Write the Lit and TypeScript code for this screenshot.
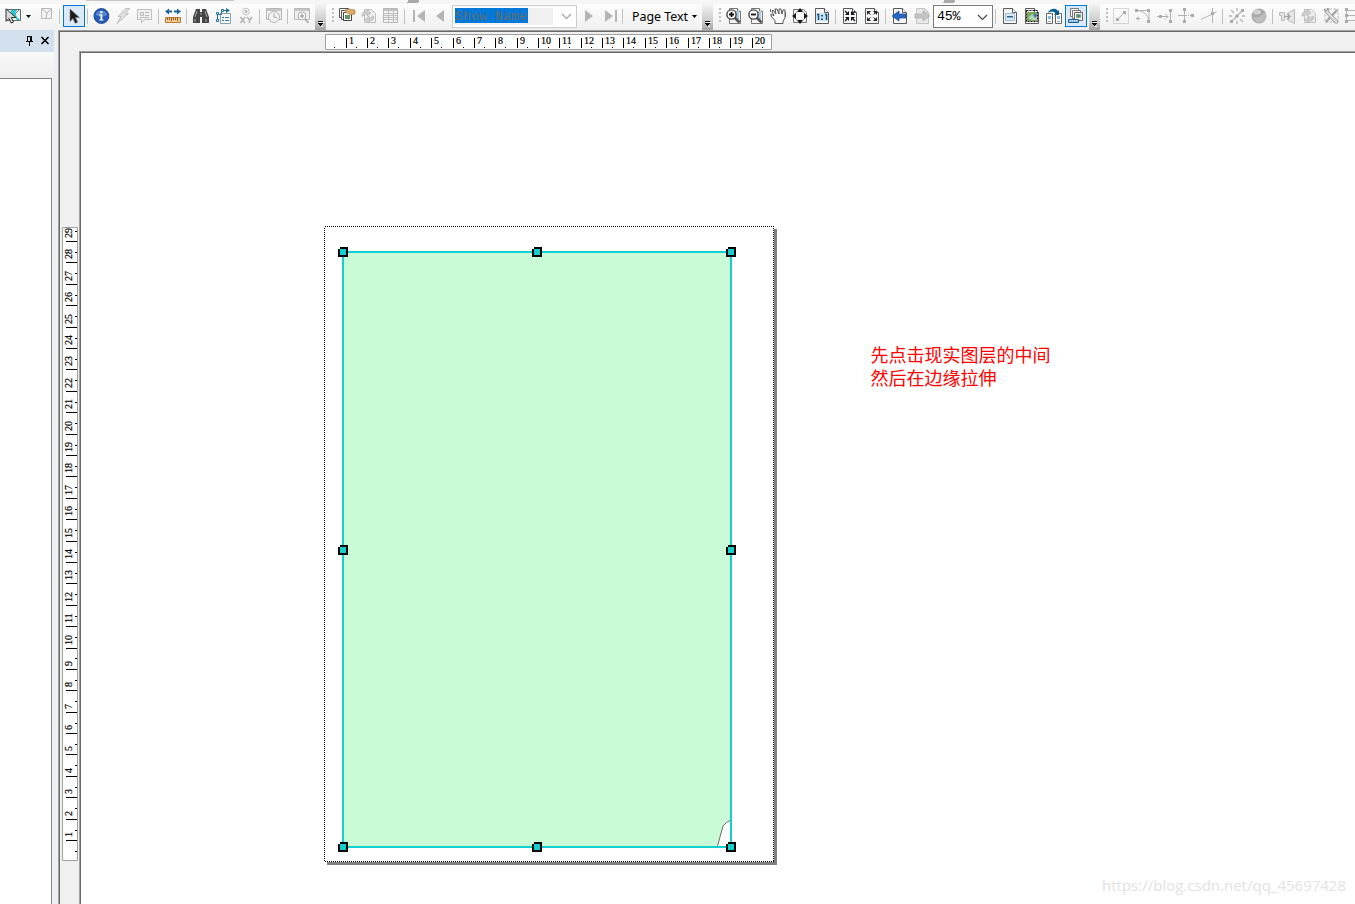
import { LitElement, html, svg, css } from "lit";
import { customElement, property } from "lit/decorators.js";

/* Shared outlines on a 16px grid. */
const sheet = svg`<path d="M1.5 .5h9l4 4v11h-13z" fill="#f5f5f5" stroke="#5a5a5a"/><path d="M10.5 .5v4h4" fill="#fff" stroke="#5a5a5a"/>`;
const graySheet = svg`<path d="M2.5 .5h8l4 4v11h-12z" fill="#e8e8e8" stroke="#c4c4c4"/><path d="M10.5 .5v4h4" fill="none" stroke="#c4c4c4"/>`;
const lens = (plus: boolean) => svg`<path d="M3.5 .5h8l3 3v12h-11z" fill="#f5f5f5" stroke="#777"/><path d="M11.5 .5v3h3" fill="#fff" stroke="#777"/><path d="M9 3h4v10h-3z" fill="#a9cde6"/><path d="M8.5 9.5l5 5" stroke="#555" stroke-width="2.6"/><circle cx="5.5" cy="6.5" r="4.6" fill="#fff" stroke="#444" stroke-width="1.4"/><path d="M3 6.5h5${plus ? "M5.5 4v5" : ""}" stroke="#111" stroke-width="1.8"/>`;
const dot = (x: number, y: number) => svg`<path d="M${x} ${y}h3v3h-3z" fill="#ababab"/>`;

const icons: Record<string, unknown> = {
  selectFeatures: svg`<path d="M1.5 1.5h14v11h-14z" fill="#f5f5f5" stroke="#666"/><path d="M6 2h6l-2 3 2 4 3 3h-3l-6-7z" fill="#20c9d7"/><path d="M10 6l4-4" stroke="#666"/><path d="M1 .8v12.6l3-3 2.1 4.7 2.3-1-2-4.6h4.5z" fill="#d8d8d8" stroke="#333"/>`,
  clear: svg`<path d="M.5 .5h10v10h-10z" fill="#f2f2f2" stroke="#bbb"/><path d="M1 1l5 4 4-4M6 5l-1 5" fill="none" stroke="#b5b5b5"/>`,
  arrow: svg`<path d="M4 1v12.5l3-3 2.2 4.8 2.5-1.1-2.3-4.7h4z" fill="#1c1c1c" stroke="#777" stroke-width=".6"/>`,
  info: svg`<circle cx="8.4" cy="8" r="7.4" fill="#245bb8" stroke="#1a438c"/><path d="M2.5 7a6 5.3 0 0 1 11.8 0q-6 3-11.8 0" fill="#5586d2"/><path d="M6.3 6.2h3v5.2h1.2v1.2H6.3v-1.2h1.2V7.4H6.3zM7.3 3h2.1v2H7.3z" fill="#fff"/>`,
  flash: svg`<path d="M10.5 .5h4l-4 5h3L2 15.5l4-7H3z" fill="#dedede" stroke="#c0c0c0"/>`,
  note: svg`<path d="M.5 1.5h14v10h-7l-3 3.5v-3.5h-4z" fill="#f0f0f0" stroke="#c0c0c0"/><path d="M3.5 4.5h3v3h-3zM8 4.5h4M8 7.5h4M3 9.5h9" fill="none" stroke="#b8b8b8"/>`,
  measure: svg`<path d="M.5 9.5h15v5h-15z" fill="#edcd91" stroke="#bd7832"/><path d="M2.5 10v2M4.5 10v2M6.5 10v3M8.5 10v2M10.5 10v2M12.5 10v3" stroke="#8f5720"/><path d="M0 3.5l4-3v2h3v2H4v2zM16 3.5l-4-3v2H9v2h3v2z" fill="#17649f"/>`,
  find: svg`<path d="M3 1h4v3h2V1h4l3 8v6H9V9H7v6H0V9z" fill="#454545"/><path d="M4 3L2 9M12 3l2 6" stroke="#aaa"/><path d="M2 11v3M13 11v3M8 5v2" stroke="#888" stroke-width="1.5"/>`,
  route: svg`<path d="M4.5 5.5h10v10h-10z" fill="#fafafa" stroke="#889fae"/><path d="M1.5 12V6.5h4v-4h6" fill="none" stroke="#1e72a7"/><path d="M10 0l4 2.5L10 5z" fill="#1e72a7"/><path d="M.5 4.5h2v2h-2zM.5 11.5h2v2h-2zM5.5 1.5h2v2h-2z" fill="#fff" stroke="#1e72a7"/><path d="M6 9.5h2M9 9.5h4M6 12.5h2M9 12.5h4" stroke="#347da9"/>`,
  xy: svg`<circle cx="8" cy="3.5" r="3.3" fill="none" stroke="#c1c1c1"/><circle cx="8" cy="3.5" r="1.4" fill="#b4b4b4"/><path d="M2.5 9l4.5 6M7 9l-4.5 6M9 9l2.5 3L14 9M11.5 12v3" fill="none" stroke="#b5b5b5" stroke-width="1.6"/>`,
  time: svg`<path d="M.5 .5h15v11h-15z" fill="#eee" stroke="#b8b8b8"/><path d="M1 2h14" stroke="#c4c4c4" stroke-width="2"/><circle cx="8" cy="9" r="5.5" fill="#f1f1f1" stroke="#b5b5b5"/><path d="M8 5.5V9l3 1" fill="none" stroke="#aaa"/>`,
  viewer: svg`<path d="M.5 .5h15v11h-15z" fill="#eee" stroke="#b8b8b8"/><path d="M1 2h14" stroke="#c4c4c4" stroke-width="2"/><circle cx="8" cy="8" r="4" fill="#f3f3f3" stroke="#b1b1b1"/><path d="M6 8h4M8 6v4M11 11l3.5 4" stroke="#aaa" stroke-width="1.6"/>`,
  pages: svg`<path d="M.5 .5h9v9h-9z" fill="#fff" stroke="#555"/><path d="M2.5 2.5h9v9h-9z" fill="#fff" stroke="#555"/><path d="M4.5 4.5h8v8h-8z" fill="#fff" stroke="#444"/><path d="M6 7h5v4H6z" fill="#609664"/><path d="M6 2l4-1 6 1v4l-5 1-2-2H7z" fill="#d9ae68" stroke="#9c753b" stroke-width=".6"/>`,
  refresh: svg`<path d="M3.5 1.5h7l4 4v9h-11z" fill="#eee" stroke="#c1c1c1"/><path d="M1 8q0-5 5-5V1l4 4-4 3V6q-2-1-3 2zM13 9q0 4-5 4v2l-4-3 4-4v2q3 1 3-2z" fill="#ccc" stroke="#b0b0b0" stroke-width=".6"/>`,
  table: svg`<path d="M.5 .5h14v14h-14z" fill="#f2f2f2" stroke="#b7b7b7"/><path d="M1 2h13" stroke="#c1c1c1" stroke-width="2"/><path d="M1 5.5h13M1 7.5h13M1 9.5h13M1 11.5h13M5.5 3v11M10.5 3v11" stroke="#c1c1c1"/>`,
  first: svg`<path d="M2 2h2v12H2zM14 2v12L6 8z" fill="#b5b5b5"/>`,
  prev: svg`<path d="M11 2v12L3 8z" fill="#b5b5b5"/>`,
  next: svg`<path d="M4 2v12l8-6z" fill="#b5b5b5"/>`,
  last: svg`<path d="M12 2h2v12h-2zM2 2v12l8-6z" fill="#b5b5b5"/>`,
  zoomIn: lens(true),
  zoomOut: lens(false),
  pan: svg`<path d="M5 15.5v-3L1 8V6l3 2-2-5 1-1 3 4-1-5h2l2 5V1h2l1 5 1-4h2v8l-2 3v2.5z" fill="#fff" stroke="#555"/><path d="M.5 1v3M15.5 4v5" stroke="#666"/>`,
  full: svg`<path d="M1.5 1.5h10l3 3v10h-13z" fill="#eee" stroke="#777"/><circle cx="8" cy="8" r="5.2" fill="#fff" stroke="#aaa"/><path d="M8 0l3 4H5zM8 16l3-4H5zM0 8l4-3v6zM16 8l-4-3v6z" fill="#151515"/>`,
  actual: svg`${sheet}<path d="M2 5h12v8H2z" fill="#c9e5f5"/><path d="M3 6.5h1.5V12M11 6.5h1.5V12" fill="none" stroke="#195477" stroke-width="1.5"/><path d="M7 7h2v1.5H7zM7 10.5h2V12H7z" fill="#195477"/>`,
  shrink: svg`${sheet}<path d="M7 7V3L3 7zM9 7h4L9 3zM7 9H3l4 4zM9 9v4l4-4z" fill="#111820"/><path d="M3 3l3 3M13 3l-3 3M3 13l3-3M13 13l-3-3" stroke="#111820" stroke-width="1.3"/>`,
  grow: svg`${sheet}<path d="M3 3h4L3 7zM13 3v4L9 3zM3 13V9l4 4zM13 13H9l4-4z" fill="#222"/><path d="M4 4l2.5 2.5M12 4L9.5 6.500M4 12l2.500-2.500M12 12L9.500 9.500" stroke="#222"/>`,
  back: svg`${sheet}<path d="M0 8l7-5v3h7v4H7v3z" fill="#2866c2" stroke="#174593" stroke-width=".7"/>`,
  forward: svg`${graySheet}<path d="M16 8L9 3v3H1v4h8v3z" fill="#c3c3c3" stroke="#adadad" stroke-width=".7"/>`,
  draft: svg`${sheet}<path d="M3.5 5.5h9v7h-9z" fill="#d7e9f8" stroke="#9dbddd"/><path d="M5 8h6v1.5H5z" fill="#306493"/>`,
  focus: svg`${sheet}<path d="M3 4h10v9H3z" fill="#78a75a"/><path d="M4 10l4-4 5 2v4H8z" fill="#b6d4b2"/><path d="M11 5l2 3-2 2-2-3z" fill="#397fae"/><path d="M2.5 2.5h11v11h-11z" fill="none" stroke="#111" stroke-dasharray="2 1"/>`,
  change: svg`<path d="M.5 5.5h6v10h-6zM9.5 5.5h6v10h-6z" fill="#fff" stroke="#666"/><path d="M2 8h3v3H2zM11 8h3v3h-3z" fill="#86bde1"/><path d="M2 13.5h3M11 13.5h3" stroke="#8aa"/><path d="M2 5q2-5 8-4l2 2 1-1v5H8l1.5-2Q6 2 2 5z" fill="#075e96"/>`,
  driven: svg`<path d="M2.5 .5h8v8h-8z" fill="#fff" stroke="#777"/><path d="M4.5 2.5h8v8h-8z" fill="#fff" stroke="#777"/><path d="M6.5 4.5h8v8h-8z" fill="#fff" stroke="#666"/><path d="M8 6h5v4H8z" fill="#8eae72"/><path d="M9 7h3v2H9z" fill="#428ab3"/><path d="M.5 11.5h10v3h-10z" fill="#82b9f0" stroke="#225e9c"/><path d="M2.5 12v1M4.5 12v1M6.5 12v1M8.5 12v1" stroke="#fff"/>`,
  line: svg`<path d="M.5 .5h15v15H.5z" fill="none" stroke="#b5b5b5" stroke-dasharray="1 1"/><path d="M4.5 11.5l7-7" stroke="#aaa"/>${dot(3, 10)}${dot(10, 3)}`,
  arc: svg`<path d="M1 2.5h13v12M3 2.5q9 1 11 10" fill="none" stroke="#b5b5b5"/>${dot(0, 1)}${dot(12, 1)}${dot(12, 12)}<path d="M1 10.5h4M3 8.5v4" stroke="#aaa"/>`,
  extend: svg`<path d="M0 8.5h11M8 5.5l3 3-3 3M13.5 2v13" fill="none" stroke="#b2b2b2"/>${dot(2, 7)}${dot(12, 1)}${dot(12, 12)}`,
  split: svg`<path d="M5.5 1v14M-1 7.5h9" stroke="#b2b2b2"/><path d="M9 7.5h4" stroke="#b2b2b2" stroke-dasharray="1 1"/>${dot(4, 0)}${dot(4, 12)}${dot(12, 6)}`,
  cross: svg`<path d="M0 11.5L15.5 4M11.5 0v15" stroke="#b2b2b2"/>${dot(10, 4)}`,
  rays: svg`<path d="M3 13L13 3M2 2l3 3M11 11l3 3M8 0v3M8 13v3M0 8h3M13 8h3" stroke="#b5b5b5" stroke-width="1.3"/>${dot(1, 12)}${dot(6.5, 6.5)}${dot(12, 1)}`,
  ball: svg`<circle cx="8" cy="8" r="7.5" fill="#aaa"/><path d="M1 8q2 2 6 1 5-2 7-5 3 5-1 9-4 3-8 1z" fill="#bdbdbd"/><ellipse cx="6" cy="4" rx="4" ry="2.5" fill="#d2d2d2"/>`,
  shape: svg`<path d="M.5 4.5h5v8h-3v-5h-2zM15.5 1.5v14l-6-3v-8z" fill="#e5e5e5" stroke="#bbb"/><path d="M5 8.5h6M8 5.5l3 3-3 3" fill="none" stroke="#a5a5a5" stroke-width="1.3"/>`,
  tools: svg`<path d="M2 1h13v13H2z" fill="none" stroke="#bbb" stroke-dasharray="3 1"/><path d="M3 14L14 2" stroke="#a5a5a5" stroke-width="2.5"/><path d="M1 1l2 4 8 9q3 3 4 0 0-2-2-3L6 4 5 0 4 3z" fill="#ddd" stroke="#999"/>`,
  edge: svg`<path d="M1.5 1v14M2 2.5h14M2 7.5h14M2 12.5h14" stroke="#b2b2b2"/>${dot(0, 0)}${dot(0, 6)}${dot(0, 12)}`,
};

@customElement("tool-icon")
class ToolIcon extends LitElement {
  @property() name = "";
  static styles = css`
    :host { display: block; flex: 0 0 22px; width: 22px; height: 22px; box-sizing: border-box; }
    :host([name="clear"]) { flex-basis: 19px; width: 19px; }
    :host([selected]) { background: #dceaf7; outline: 1px solid #0078d7; outline-offset: -1px; }
    svg { display: block; }
  `;
  render() {
    return html`<svg width="22" height="22" viewBox="-3 -3 22 22" fill="none">${icons[this.name]}</svg>`;
  }
}

@customElement("app-root")
class AppRoot extends LitElement {
  static styles = css`
    :host { display: flex; flex-direction: column; width: 1355px; height: 904px; overflow: hidden; background: #f0f0f0; color: #000; font-family: "Noto Sans", sans-serif; }
    .strip { flex: 0 0 4px; display: block; }
    .bar { flex: 0 0 26px; display: flex; align-items: flex-start; overflow: hidden; background: linear-gradient(#fdfdfd, #f0f0f0); }
    tool-icon, .sep, .grip { margin-top: 1px; }
    .sep { flex: 0 0 6px; height: 22px; }
    .sep::after { content: ""; display: block; width: 1px; height: 15px; margin: 4px 0 0 2px; background: #c2c2c2; }
    .thin { flex-basis: 5px; }
    .n { flex: 0 0 1px; }
    .back { flex: 0 0 0; margin-left: -1px; }
    .more { flex: 0 0 11px; height: 26px; margin-left: 2px; background: linear-gradient(#f3f3f3, #cfcfcf 60%, #a5a5a5); }
    .more svg { display: block; }
    .grip { flex: 0 0 8px; height: 22px; margin-left: 2px; }
    .grip svg { display: block; }
    .caret { flex: 0 0 13px; height: 22px; }
    .caret.small { flex-basis: 10px; }
    .combo { box-sizing: border-box; display: flex; height: 23px; margin-top: 1px; background: #fff; border: 1px solid #ccc; font: 13.333px/20px "Liberation Mono", monospace; }
    .name { flex: 0 0 125px; padding: 2px 2px; }
    .edit { flex: 0 0 98px; height: 17px; background: #f0f0f0; }
    .picked { display: block; width: 73px; height: 15px; background: #0078d7; color: #646b72; line-height: 17px; overflow: hidden; }
    .name .chev { margin: 5px 0 0 8px; }
    .zoom { flex: 0 0 60px; border-color: #7a7a7a; padding-left: 3px; letter-spacing: -.2px; line-height: 22px; }
    .zoom span { flex: 0 0 39px; }
    .chev { flex: 0 0 11px; margin: 8px 0 0 1px; }
    .text { flex: 0 0 58px; margin: 3px 0 0 6px; font-size: 12.4px; line-height: 20px; white-space: nowrap; }
    .main { flex: 1; display: flex; min-height: 0; }
    .side { flex: 0 0 58px; display: flex; flex-direction: column; background: #eef0f3; }
    .head { width: 54px; height: 22px; background: #d3e0ed; }
    .head svg { display: block; }
    .sub { width: 54px; height: 26px; background: linear-gradient(#f9f9f9, #eee); }
    .list { flex: 1; width: 51px; background: #fff; border-top: 1px solid #828790; border-right: 1px solid #828790; }
    .view { flex: 1; display: grid; grid-template: 19px 1fr / 19px 1fr; border-left: 1px solid #a0a0a0; border-top: 1px solid #a0a0a0; box-shadow: inset 1px 1px #696969; padding: 1px 0 0 1px; }
    .hr { grid-column: 2; }
    .vr { grid-row: 2; }
    .hr, .vr { display: block; }
    .hr text, .vr text { font: 10px "Liberation Serif", serif; stroke: #000; stroke-width: .2px; }
    .canvas { grid-area: 2 / 2; border-left: 1px solid #a0a0a0; border-top: 1px solid #a0a0a0; box-shadow: inset 1px 1px #696969; padding: 1px 0 0 1px; background: #fff; overflow: hidden; }
    .canvas svg { display: block; }
    .note { font: 18px "Liberation Sans", "Noto Sans CJK SC", sans-serif; fill: #f00; }
    .mark { font: 15px "Open Sans", sans-serif; fill: #e2e2e2; }
  `;

  private row(names: string) {
    return names.split(" ").map((n) => {
      if (n === "|") return html`<span class="sep"></span>`;
      if (n === "!") return html`<span class="sep thin"></span>`;
      if (n === ".") return html`<span class="n"></span>`;
      if (n === "<") return html`<span class="back"></span>`;
      return html`<tool-icon name=${n.replace("*", "")} ?selected=${n.endsWith("*")}></tool-icon>`;
    });
  }

  private more() {
    return html`<span class="more"><svg width="11" height="26" shape-rendering="crispEdges"><path d="M3 17h5v1H3z" fill="#111"/><path d="M4 18h5v1H4z" fill="#fff"/><path d="M3 19h5l-2.5 3z" fill="#000"/><path d="M6 22h2v1H6z" fill="#fff"/></svg></span>`;
  }

  private grip() {
    return html`<span class="grip"><svg width="8" height="22">${[3, 7, 11, 15].map((y) => svg`<path d="M4 ${y}h2v2H4z" fill="#bebebe"/>`)}</svg></span>`;
  }

  private chev(color: string) {
    return html`<svg class="chev" width="11" height="8"><path d="M1 1l4.5 4.5L10 1" fill="none" stroke=${color} stroke-width="1.2"/></svg>`;
  }

  private hTicks() {
    return Array.from({ length: 21 }, (_, n) => {
      const x = 245.3 + n * 21.37;
      const left = Math.round(x);
      return svg`${n ? svg`<path d="M${left} 6h1v10h-1z"/><text x=${left + 3} y="12">${n}</text>` : ""}
        <path d=${`M${Math.round(x + 10)} 15h1v1h-1z`}/>`;
    });
  }

  private vTicks() {
    return Array.from({ length: 30 }, (_, n) => {
      const y = Math.round(830.4 - n * 21.39);
      const half = Math.round(830.4 - n * 21.39 - 10.4);
      return svg`${n ? svg`<path d="M6 ${y}h11v1H6z"/><text transform=${`translate(12 ${y - 3}) rotate(-90)`}>${n}</text>` : ""}
        <path d=${`M15 ${half}h2v1h-2z`}/>`;
    });
  }

  render() {
    const handles = [[261, 198], [455, 198], [649, 198], [261, 496], [649, 496], [261, 793], [455, 793], [649, 793]];
    return html`
      <svg class="strip" width="1355" height="4"><path d="M0 0h1355v4H0z" fill="#f6f6f6"/><path d="M86 0h148v1H86z" fill="#c8c8c8"/><path d="M408 0h11v2h-1v1h-11v-1h1zM944 0h11v2h-1v1h-11v-1h1z" fill="#a9a9a9"/></svg>
      <div class="bar">
        ${this.row(". . selectFeatures")}
        <svg class="caret" width="13" height="22"><path d="M2 11h5l-2.5 3z" fill="#000"/></svg>
        ${this.row(". clear | arrow* ! info flash note | measure | find . route xy | time | viewer")}
        ${this.more()}${this.grip()}
        ${this.row("pages refresh table | first prev")}
        <div class="combo name"><span class="edit"><span class="picked">Show Name</span></span>${this.chev("#a0a0a0")}</div>
        ${this.row(". next last < < |")}
        <span class="text">Page Text</span><svg class="caret small" width="10" height="22"><path d="M2 11h5l-2.5 3z" fill="#000"/></svg>
        ${this.more()}${this.grip()}
        ${this.row("zoomIn zoomOut pan full actual | shrink grow | back forward")}
        <div class="combo zoom"><span>45%</span>${this.chev("#444")}</div>
        ${this.row("| draft focus change driven*")}
        ${this.more()}${this.grip()}
        ${this.row("line arc extend split cross | rays ball | shape refresh tools edge")}
      </div>
      <div class="main">
        <div class="side">
          <div class="head"><svg width="54" height="22" fill="none" stroke="#000" shape-rendering="crispEdges"><path d="M27.5 11v-4.5h4V11M30.5 7v4M26 11.5h7M29.5 12v4"/><path d="M41.5 7l7 7M48.5 7l-7 7" stroke-width="1.6" shape-rendering="auto"/></svg></div>
          <div class="sub"></div>
          <div class="list"></div>
        </div>
        <div class="view">
          <svg class="hr" width="1276" height="19"><path d="M246.5 2.5h446v15h-446z" fill="#fff" stroke="#a0a0a0"/>${this.hTicks()}</svg>
          <svg class="vr" width="19" height="853"><g transform="translate(0 -20)"><path d="M2.5 196.5h15v633h-15z" fill="#fff" stroke="#a0a0a0"/>${this.vTicks()}</g></svg>
          <div class="canvas">
            <svg width="1274" height="851">
              <path d="M246 176h450v636H246z" fill="#808080"/>
              <path d="M243.5 173.5h449v635h-449z" fill="#fff" stroke="#fff"/>
              <path d="M243.5 173.5h449v635h-449z" fill="none" stroke="#000" stroke-dasharray="1 1" shape-rendering="crispEdges"/>
              <path d="M262 199h388v595H262z" fill="#c9fbd7"/>
              <path d="M636.5 793l5.5-20q3-4 8-6v26z" fill="#fff"/><path d="M636.5 793l5.5-20q3-4 8-6" fill="none" stroke="#657069"/>
              <path d="M262 199h388v595H262z" fill="none" stroke="#14cfcf" stroke-width="2"/>
              ${handles.map(([x, y]) => svg`<path d="M${x - 2} ${y - 4}h8v10h-10v-8h2z" fill="#000"/><path d="M${x - 2} ${y - 2}h6v6h-6z" fill="#14cfcf"/>`)}
              <text class="note" x="789.5" y="309">先点击现实图层的中间</text>
              <text class="note" x="789.5" y="332">然后在边缘拉伸</text>
              <text class="mark" x="1021" y="838" textLength="244">https://blog.csdn.net/qq_45697428</text>
            </svg>
          </div>
        </div>
      </div>`;
  }
}
